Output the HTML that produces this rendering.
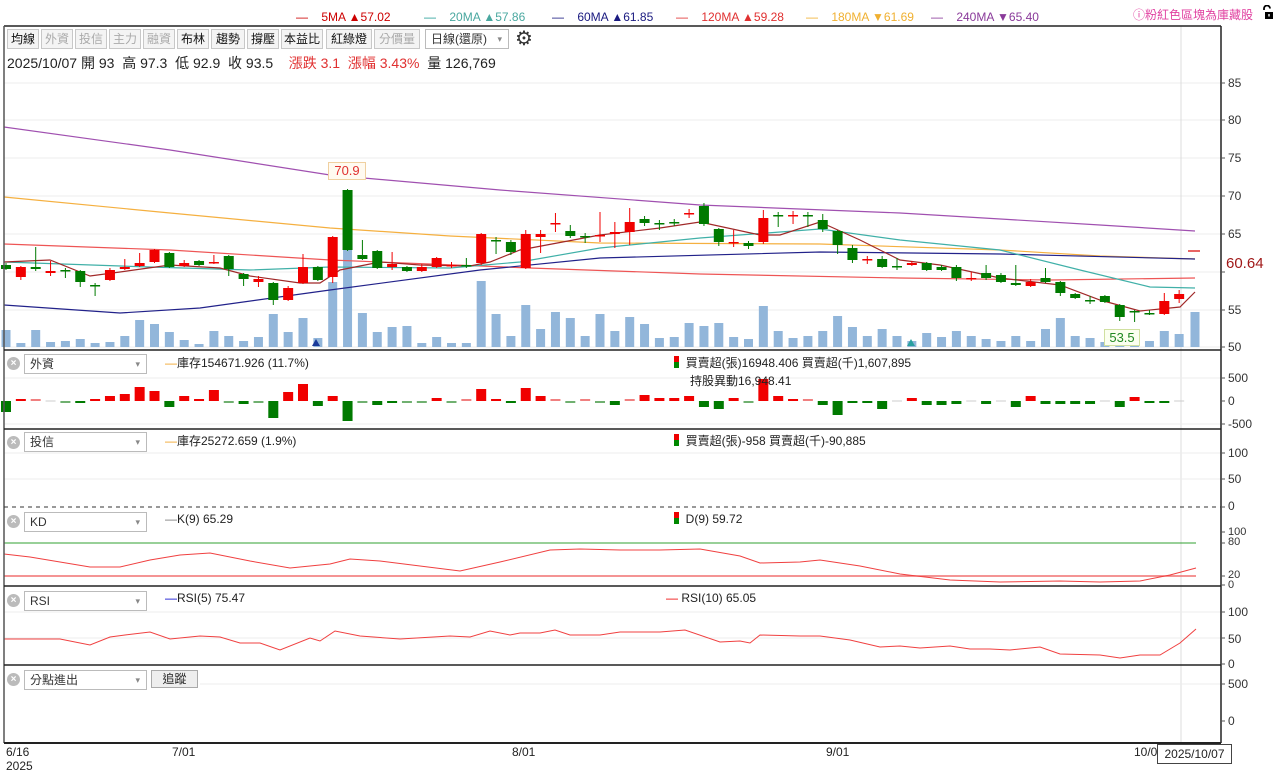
<!DOCTYPE html>
<html><head><meta charset="utf-8">
<style>
*{margin:0;padding:0;box-sizing:border-box}
body{width:1280px;height:772px;background:#fff;position:relative;overflow:hidden;font-family:"Liberation Sans","Noto Sans CJK TC",sans-serif;color:#222}
.abs{position:absolute;white-space:nowrap}
.btn{position:absolute;top:29px;height:20px;border:1px solid #c8c8c8;background:#f4f4f4;font-size:12px;line-height:18px;text-align:center;color:#111}
.btn.g{color:#aaa}
.leg{font-size:12px;top:10px}
.sel{position:absolute;height:20px;border:1px solid #bbb;background:#fff;font-size:12px;line-height:18px;padding-left:5px;color:#333}
.sel:after{content:"▾";position:absolute;right:6px;top:0;font-size:9px;color:#888}
.x{position:absolute;width:13px;height:13px;border-radius:50%;background:#bbb;color:#fff;font-size:10px;line-height:13px;text-align:center;font-weight:bold}
.ax{position:absolute;left:1228px;font-size:12px;color:#333}
.lab{position:absolute;font-size:12px;color:#222}
</style></head><body>
<svg id="s" width="1280" height="772" style="position:absolute;left:0;top:0"></svg>

<div class="abs leg" style="left:296px;color:#c00">—&nbsp;&nbsp;&nbsp; 5MA ▲57.02</div>
<div class="abs leg" style="left:424px;color:#2aa198">—&nbsp;&nbsp;&nbsp; <span style="color:#4aa8a0">20MA ▲57.86</span></div>
<div class="abs leg" style="left:552px;color:#1a1a80">—&nbsp;&nbsp;&nbsp; 60MA ▲61.85</div>
<div class="abs leg" style="left:676px;color:#e03030">—&nbsp;&nbsp;&nbsp; 120MA ▲59.28</div>
<div class="abs leg" style="left:806px;color:#f0b030">—&nbsp;&nbsp;&nbsp; 180MA ▼61.69</div>
<div class="abs leg" style="left:931px;color:#8a3a9a">—&nbsp;&nbsp;&nbsp; 240MA ▼65.40</div>
<div class="abs" style="left:1133px;top:6px;font-size:12px;color:#e040a0">ⓘ粉紅色區塊為庫藏股</div>
<svg class="abs" style="left:1262px;top:5px" width="12" height="14"><path d="M2 5 V3.5 a3 3 0 0 1 6 0" fill="none" stroke="#000" stroke-width="1.8"/><rect x="3" y="7" width="8" height="7" fill="#000"/><rect x="6.3" y="9" width="1.4" height="2.5" fill="#fff"/></svg>

<div class="btn" style="left:7px;width:32px">均線</div>
<div class="btn g" style="left:41px;width:32px">外資</div>
<div class="btn g" style="left:75px;width:32px">投信</div>
<div class="btn g" style="left:109px;width:32px">主力</div>
<div class="btn g" style="left:143px;width:32px">融資</div>
<div class="btn" style="left:177px;width:32px">布林</div>
<div class="btn" style="left:211px;width:34px">趨勢</div>
<div class="btn" style="left:247px;width:32px">撐壓</div>
<div class="btn" style="left:281px;width:42px">本益比</div>
<div class="btn" style="left:326px;width:46px">紅綠燈</div>
<div class="btn g" style="left:374px;width:46px">分價量</div>
<div class="sel" style="left:425px;top:29px;width:84px">日線(還原)</div>
<div class="abs" style="left:515px;top:26px;font-size:20px;color:#333">⚙</div>

<div class="abs" style="left:7px;top:53px;font-size:14px;color:#222">2025/10/07 開 93&nbsp; 高 97.3&nbsp; 低 92.9&nbsp; 收 93.5&nbsp;&nbsp;&nbsp; <span style="color:#e03030">漲跌 3.1&nbsp; 漲幅 3.43%</span>&nbsp; 量 126,769</div>

<div class="abs" style="left:328px;top:162px;width:38px;height:18px;border:1px solid #f0d0a0;background:#fffaf0;color:#e03030;font-size:13px;text-align:center;line-height:16px">70.9</div>
<div class="abs" style="left:1104px;top:329px;width:36px;height:17px;border:1px solid #d0e0a0;background:#fbfff0;color:#228822;font-size:13px;text-align:center;line-height:15px">53.5</div>

<div class="ax" style="top:76px">85</div><div class="ax" style="top:113px">80</div><div class="ax" style="top:151px">75</div><div class="ax" style="top:189px">70</div><div class="ax" style="top:227px">65</div><div class="ax" style="top:303px">55</div><div class="ax" style="top:340px">50</div>
<div class="ax" style="top:255px;font-size:15px;color:#a01818;left:1226px">60.64</div>
<div class="ax" style="top:371px">500</div><div class="ax" style="top:394px">0</div><div class="ax" style="top:417px">-500</div>
<div class="ax" style="top:446px">100</div><div class="ax" style="top:472px">50</div><div class="ax" style="top:499px">0</div>
<div class="ax" style="top:526px;font-size:11px">100</div><div class="ax" style="top:536px;font-size:11px">80</div><div class="ax" style="top:569px;font-size:11px">20</div><div class="ax" style="top:579px;font-size:11px">0</div>
<div class="ax" style="top:605px">100</div><div class="ax" style="top:632px">50</div><div class="ax" style="top:657px">0</div>
<div class="ax" style="top:677px">500</div><div class="ax" style="top:714px">0</div>

<div class="x" style="left:7px;top:357px">×</div><div class="sel" style="left:24px;top:354px;width:123px">外資</div>
<div class="lab" style="left:165px;top:354px"><span style="color:#f0a020">—</span>庫存154671.926 (11.7%)</div>
<div class="lab" style="left:674px;top:354px"><span style="display:inline-block;width:5px;height:12px;background:linear-gradient(#e00 50%,#080 50%);vertical-align:-1px"></span>&nbsp; 買賣超(張)16948.406 買賣超(千)1,607,895</div>
<div class="lab" style="left:690px;top:372px">持股異動16,948.41</div>

<div class="x" style="left:7px;top:436px">×</div><div class="sel" style="left:24px;top:432px;width:123px">投信</div>
<div class="lab" style="left:165px;top:432px"><span style="color:#f0a020">—</span>庫存25272.659 (1.9%)</div>
<div class="lab" style="left:674px;top:432px"><span style="display:inline-block;width:5px;height:12px;background:linear-gradient(#e00 50%,#080 50%);vertical-align:-1px"></span>&nbsp; 買賣超(張)-958 買賣超(千)-90,885</div>

<div class="x" style="left:7px;top:515px">×</div><div class="sel" style="left:24px;top:512px;width:123px">KD</div>
<div class="lab" style="left:165px;top:512px"><span style="color:#777">—</span>K(9) 65.29</div>
<div class="lab" style="left:674px;top:512px"><span style="display:inline-block;width:5px;height:12px;background:linear-gradient(#e00 50%,#080 50%);vertical-align:-1px"></span>&nbsp; D(9) 59.72</div>

<div class="x" style="left:7px;top:594px">×</div><div class="sel" style="left:24px;top:591px;width:123px">RSI</div>
<div class="lab" style="left:165px;top:591px"><span style="color:#00c">—</span>RSI(5) 75.47</div>
<div class="lab" style="left:666px;top:591px"><span style="color:#e00">—</span> RSI(10) 65.05</div>

<div class="x" style="left:7px;top:673px">×</div><div class="sel" style="left:24px;top:670px;width:123px">分點進出</div>
<div class="abs" style="left:151px;top:670px;width:47px;height:18px;border:1px solid #aaa;background:#eee;font-size:12px;text-align:center;line-height:16px">追蹤</div>

<div class="lab" style="left:6px;top:745px">6/16<br>2025</div>
<div class="lab" style="left:172px;top:745px">7/01</div>
<div class="lab" style="left:512px;top:745px">8/01</div>
<div class="lab" style="left:826px;top:745px">9/01</div>
<div class="lab" style="left:1134px;top:745px">10/0</div>
<div class="abs" style="left:1157px;top:744px;width:75px;height:20px;border:1px solid #444;background:#fff;font-size:12px;line-height:18px;text-align:center">2025/10/07</div>

<script>
var s=document.getElementById('s'),h='';
function L(x1,y1,x2,y2,c,w,d){h+='<line x1="'+x1+'" y1="'+y1+'" x2="'+x2+'" y2="'+y2+'" stroke="'+c+'" stroke-width="'+(w||1)+'"'+(d?' stroke-dasharray="'+d+'"':'')+'/>';}
function R(x,y,w,hh,c){h+='<rect x="'+x+'" y="'+y+'" width="'+w+'" height="'+hh+'" fill="'+c+'"/>';}
function P(pts,c,w){h+='<polyline fill="none" stroke="'+c+'" stroke-width="'+(w||1)+'" points="'+pts.map(function(p){return p.join(',')}).join(' ')+'"/>';}
[83,120,158,196,234,272,310,347].forEach(function(y){L(4,y,1222,y,'#ececec');});
L(1181,26,1181,743,'#ddd');
[378,424].forEach(function(y){L(4,y,1222,y,'#ececec');});
[453,479].forEach(function(y){L(4,y,1222,y,'#ececec');});
[612,638].forEach(function(y){L(4,y,1222,y,'#ececec');});
L(200,684,1222,684,'#ececec');
var vt=[330,343,330,342,341,339,343,342,336,320,324,332,340,344,331,336,341,337,314,332,318,338,282,250,313,332,327,326,343,337,343,343,281,314,336,305,329,312,318,336,314,331,317,324,338,337,323,326,323,337,339,306,331,338,336,331,316,327,336,329,336,341,333,337,331,336,339,341,336,341,329,318,336,338,342,340,345,341,331,334,312];
function X(i){return 6+i*14.85;}
vt.forEach(function(t,i){var x=i==80?1195:X(i);R(x-4.5,t,9,347-t,'#92b6da');});
var C=[[265,269,263,270,'g'],[267,277,266,280,'r'],[267,269,247,271,'g'],[271,273,261,276,'r'],[270,270,268,278,'g'],[271,282,270,287,'g'],[285,285,283,296,'g'],[270,280,268,281,'r'],[267,269,259,270,'r'],[263,266,253,267,'r'],[250,262,249,263,'r'],[253,267,252,268,'g'],[263,266,260,267,'r'],[261,265,260,266,'g'],[262,263,255,264,'r'],[256,269,255,276,'g'],[274,279,273,286,'g'],[279,282,276,287,'r'],[283,300,282,305,'g'],[288,300,286,301,'r'],[267,283,254,284,'r'],[267,280,266,281,'g'],[237,277,236,283,'r'],[190,250,189,251,'g'],[255,259,240,260,'g'],[251,268,250,269,'g'],[264,267,252,270,'r'],[267,271,266,272,'g'],[267,271,264,272,'r'],[258,267,257,268,'r'],[265,266,262,268,'r'],[265,266,258,268,'g'],[234,263,233,265,'r'],[240,241,237,254,'g'],[242,252,240,255,'g'],[234,268,230,269,'r'],[234,237,230,253,'r'],[223,224,213,232,'r'],[231,236,225,238,'g'],[236,237,233,243,'g'],[235,236,212,242,'r'],[232,234,222,248,'r'],[222,232,208,245,'r'],[219,223,216,226,'g'],[223,224,220,230,'g'],[222,223,219,226,'g'],[213,214,209,218,'r'],[206,224,203,226,'g'],[229,242,228,246,'g'],[242,243,230,247,'r'],[243,246,241,249,'g'],[218,242,210,244,'r'],[215,216,212,227,'g'],[215,216,211,224,'r'],[215,216,212,227,'g'],[220,229,214,232,'g'],[231,245,230,254,'g'],[248,260,245,263,'g'],[259,260,256,264,'r'],[259,267,256,268,'g'],[266,267,258,270,'g'],[263,265,261,266,'r'],[263,270,262,271,'g'],[267,270,265,271,'g'],[267,278,265,281,'g'],[278,279,272,281,'r'],[273,278,265,280,'g'],[275,282,273,283,'g'],[283,285,265,286,'g'],[282,286,279,287,'r'],[278,282,268,283,'g'],[282,293,281,296,'g'],[294,298,293,299,'g'],[300,301,296,304,'g'],[296,302,295,303,'g'],[305,317,304,321,'g'],[311,312,310,322,'g'],[313,314,310,315,'g'],[301,314,293,315,'r'],[294,299,290,303,'r']];
var LINES=[
[[4,127],[170,150],[330,175],[500,190],[700,205],[900,213],[1100,225],[1195,231]],
[[4,197],[170,213],[330,228],[450,236],[600,243],[820,244],[1000,250],[1100,256],[1195,259]],
[[4,244],[170,250],[330,260],[530,268],[700,274],[900,278],[1050,280],[1195,278]],
[[4,305],[120,313],[200,308],[330,290],[480,270],[600,258],[820,252],[1000,254],[1195,259]],
[[4,262],[150,267],[250,270],[330,267],[450,268],[520,262],[600,248],[700,238],[820,229],[900,240],[1000,250],[1080,270],[1150,287],[1195,288]],
[[4,262],[50,260],[90,276],[120,272],[170,265],[220,268],[250,276],[300,283],[320,283],[340,270],[380,262],[420,265],[470,266],[490,262],[520,250],[600,235],[660,228],[700,222],[760,235],[780,235],[820,222],[860,240],[900,260],[940,265],[1000,278],[1060,285],[1100,300],[1140,311],[1180,307],[1195,292]]];
var LC=['#a050b0','#f5b040','#ee5555','#22228a','#40b0a8','#a02828'];
LINES.forEach(function(p,i){P(p,LC[i],1.2);});
C.forEach(function(c,i){var x=X(i),col=c[4]=='r'?'#f00000':'#007a00';L(x,c[2],x,c[3],col);var t=Math.min(c[0],c[1]),b=Math.max(c[0],c[1]);R(x-5,t,10,Math.max(b-t,1.5),col);});
L(1188,251,1200,251,'#e03030',1.5);
h+='<polygon points="312,346 316,339 320,346" fill="#1a3a9a"/><polygon points="907,346 911,339 915,346" fill="#2aa0a0"/><polygon points="1131,346 1135,339 1139,346" fill="#a01818"/>';
var F=[-11,2,1,0,-1,-2,2,5,7,14,10,-6,5,2,11,-1,-3,-1,-17,9,17,-5,5,-20,-1,-4,-2,-1,-1,3,-1,1,12,2,-2,13,5,1,-1,1,-1,-4,1,6,3,3,5,-6,-8,3,-1,22,5,2,1,-4,-14,-2,-2,-8,0,3,-4,-4,-3,0,-3,0,-6,5,-3,-3,-3,-3,0,-6,4,-2,-2,0];
F.forEach(function(v,i){var x=X(i);if(v==0){L(x-5,401,x+5,401,'#ccc');return;}if(Math.abs(v)<=1){R(x-5,401-(v>0?2:0),10,2,v>0?'#f08080':'#70b070');return;}R(x-5,v>0?401-v:401,10,Math.abs(v),v>0?'#f00000':'#007a00');});
L(4,543,1196,543,'#30a030');L(4,576,1196,576,'#f07070',1.5);
P([[4,554],[30,557],[90,567],[120,567],[150,560],[180,555],[210,553],[250,561],[290,568],[330,564],[350,559],[380,561],[420,566],[460,571],[500,562],[550,550],[580,549],[620,550],[660,550],[700,549],[740,556],[760,563],[800,562],[820,560],[860,566],[900,574],[950,580],[1000,582],[1060,581],[1100,582],[1140,581],[1170,575],[1196,568]],'#f04040');
P([[4,639],[60,639],[90,645],[110,637],[125,635],[150,632],[170,639],[200,636],[220,637],[240,643],[260,643],[280,650],[310,638],[320,641],[335,631],[360,636],[400,639],[450,636],[470,637],[490,631],[510,635],[520,633],[540,633],[555,630],[570,635],[600,635],[620,632],[660,632],[685,630],[720,642],[740,641],[750,643],[760,635],[800,636],[820,636],[850,640],[880,647],[900,646],[920,648],[950,646],[970,649],[990,649],[1010,650],[1030,648],[1040,647],[1060,654],[1100,655],[1120,658],[1140,655],[1160,655],[1180,643],[1196,629]],'#f04040');
L(4,26,1221,26,'#222',1.5);L(1221,26,1221,743,'#222',1.5);L(4,26,4,743,'#555',1.5);
[350,429,586,665].forEach(function(y){L(4,y,1221,y,'#222',1.5);});
L(4,507,1221,507,'#333',1,'4,4');
L(4,743,1221,743,'#222',2);
[83,120,158,196,234,272,310,347,378,401,424,453,479,507,532,543,576,585,612,638,664,684,721].forEach(function(y){L(1221,y,1225,y,'#555');});
s.innerHTML=h;
</script>
</body></html>
